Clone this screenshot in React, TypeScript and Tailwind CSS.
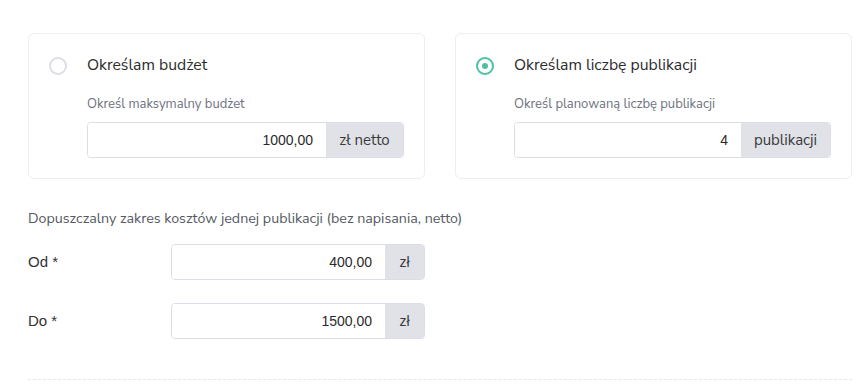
import React, { useState } from 'react';

const sans = "font-['Nunito_Sans','Lato','Open_Sans',sans-serif]";
const arial = "font-['Liberation_Sans',Arial,sans-serif]";

const Radio = ({ checked }: { checked: boolean }) => (
  <span
    className={`flex h-[18px] w-[18px] shrink-0 items-center justify-center rounded-full border-2 bg-white ${
      checked ? 'border-[#4cbfa6]' : 'border-[#dcdee5]'
    }`}
  >
    {checked && <span className="h-[6px] w-[6px] rounded-full bg-[#4cbfa6]" />}
  </span>
);

const InputGroup = ({
  value,
  addon,
  addonWidth,
  addonFont,
}: {
  value: string;
  addon: string;
  addonWidth: string;
  addonFont: string;
}) => (
  <div className="flex h-9 w-full overflow-hidden rounded-[4px] border border-[#dcdde6]">
    <input
      readOnly
      value={value}
      className={`min-w-0 flex-1 bg-white pr-[13px] text-right text-[14px] text-[#2a2a2a] outline-none ${arial}`}
    />
    <span
      className={`flex ${addonWidth} shrink-0 items-center justify-center bg-[#e0e2e8] text-[#3a3a3a] ${addonFont}`}
    >
      {addon}
    </span>
  </div>
);

const OptionCard = ({
  checked,
  title,
  label,
  value,
  addon,
  addonWidth,
  onSelect,
}: {
  checked: boolean;
  title: string;
  label: string;
  value: string;
  addon: string;
  addonWidth: string;
  onSelect: () => void;
}) => (
  <div
    onClick={onSelect}
    className="flex cursor-pointer gap-5 rounded-[6px] border border-[#eceef1] bg-white pb-5 pl-5 pr-5 pt-[22px]"
  >
    <div className="pt-px">
      <Radio checked={checked} />
    </div>
    <div className="flex-1">
      <div className={`text-[15.75px] leading-[18px] text-[#2b2b2b] ${sans}`}>{title}</div>
      <div className={`mt-[22px] text-[13px] leading-4 text-[#6e7280] ${sans}`}>{label}</div>
      <div className="mt-[10px]">
        <InputGroup
          value={value}
          addon={addon}
          addonWidth={addonWidth}
          addonFont={`text-[15px] ${sans}`}
        />
      </div>
    </div>
  </div>
);

export default function App() {
  const [mode, setMode] = useState<'budget' | 'count'>('count');

  return (
    <div className="min-h-[387px] bg-white pl-7 pr-4 pt-[33px]">
      <div className="grid grid-cols-2 gap-[30px]">
        <OptionCard
          checked={mode === 'budget'}
          title="Określam budżet"
          label="Określ maksymalny budżet"
          value="1000,00"
          addon="zł netto"
          addonWidth="w-[77px]"
          onSelect={() => setMode('budget')}
        />
        <OptionCard
          checked={mode === 'count'}
          title="Określam liczbę publikacji"
          label="Określ planowaną liczbę publikacji"
          value="4"
          addon="publikacji"
          addonWidth="w-[89px]"
          onSelect={() => setMode('count')}
        />
      </div>

      <div className={`mt-[32px] text-[14.25px] leading-4 text-[#555a63] ${sans}`}>
        Dopuszczalny zakres kosztów jednej publikacji (bez napisania, netto)
      </div>

      <div className="mt-[17px] flex flex-col gap-[23px]">
        {[
          { label: 'Od *', value: '400,00' },
          { label: 'Do *', value: '1500,00' },
        ].map((row) => (
          <div key={row.label} className="flex items-center">
            <div className={`w-[143px] text-[15px] text-[#333] ${arial}`}>{row.label}</div>
            <div className="w-[254px]">
              <InputGroup
                value={row.value}
                addon="zł"
                addonWidth="w-[39px]"
                addonFont={`text-[14px] ${arial}`}
              />
            </div>
          </div>
        ))}
      </div>

      <div className="mt-10 border-t border-dashed border-[#e6e7ea]" />
    </div>
  );
}
